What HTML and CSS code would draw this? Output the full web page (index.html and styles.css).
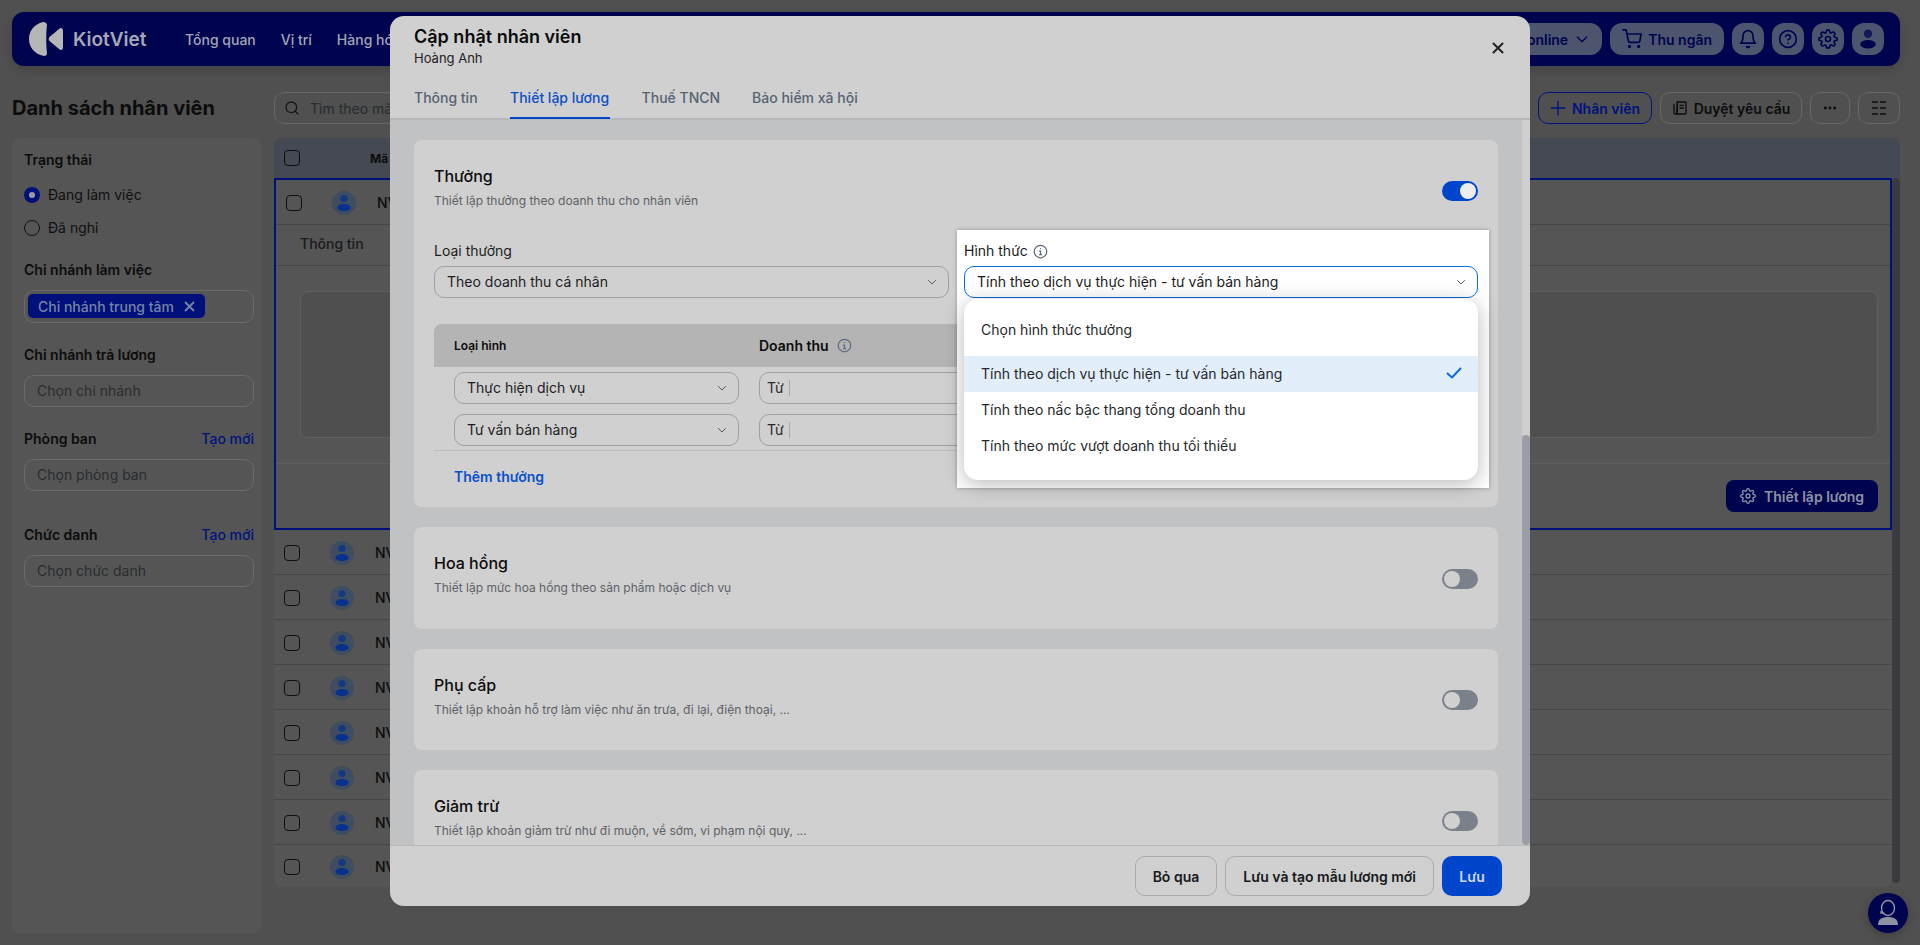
FILE: index.html
```html
<!DOCTYPE html>
<html lang="vi">
<head>
<meta charset="utf-8">
<title>Danh sách nhân viên</title>
<link rel="stylesheet" href="styles.css">
</head>
<body>
<svg class="sprite" width="0" height="0">
  <symbol id="chev" viewBox="0 0 24 24"><path d="M5 9l7 7 7-7" fill="none" stroke="currentColor" stroke-width="2" stroke-linecap="round" stroke-linejoin="round"/></symbol>
  <symbol id="info" viewBox="0 0 24 24"><g fill="none" stroke="currentColor" stroke-width="2" stroke-linecap="round"><circle cx="12" cy="12" r="10"/><path d="M10.5 11.5H12V17M10.5 17h3M12 7.5h.01"/></g></symbol>
  <symbol id="gear" viewBox="0 0 24 24"><g fill="none" stroke="currentColor" stroke-width="2" stroke-linecap="round" stroke-linejoin="round"><circle cx="12" cy="12" r="3"/><path d="M19.4 15a1.65 1.65 0 0 0 .33 1.82l.06.06a2 2 0 0 1 0 2.83 2 2 0 0 1-2.83 0l-.06-.06a1.65 1.65 0 0 0-1.82-.33 1.65 1.65 0 0 0-1 1.51V21a2 2 0 0 1-2 2 2 2 0 0 1-2-2v-.09A1.65 1.65 0 0 0 9 19.4a1.65 1.65 0 0 0-1.82.33l-.06.06a2 2 0 0 1-2.83 0 2 2 0 0 1 0-2.83l.06-.06a1.65 1.65 0 0 0 .33-1.82 1.65 1.65 0 0 0-1.51-1H3a2 2 0 0 1-2-2 2 2 0 0 1 2-2h.09A1.65 1.65 0 0 0 4.6 9a1.65 1.65 0 0 0-.33-1.82l-.06-.06a2 2 0 0 1 0-2.83 2 2 0 0 1 2.83 0l.06.06a1.65 1.65 0 0 0 1.82.33H9a1.65 1.65 0 0 0 1-1.51V3a2 2 0 0 1 2-2 2 2 0 0 1 2 2v.09a1.65 1.65 0 0 0 1 1.51 1.65 1.65 0 0 0 1.82-.33l.06-.06a2 2 0 0 1 2.83 0 2 2 0 0 1 0 2.83l-.06.06a1.65 1.65 0 0 0-.33 1.82V9a1.65 1.65 0 0 0 1.51 1H21a2 2 0 0 1 2 2 2 2 0 0 1-2 2h-.09a1.65 1.65 0 0 0-1.51 1z"/></g></symbol>
  <symbol id="person" viewBox="0 0 24 24"><circle cx="12" cy="7.5" r="3.6" fill="currentColor" opacity=".75"/><ellipse cx="12" cy="16.5" rx="6.6" ry="3.6" fill="currentColor"/></symbol>
</svg>

<div class="app">
  <header class="topbar">
    <div class="logo">
      <svg width="36" height="34" viewBox="0 0 36 34"><path d="M15 0C6 2 1 9 1 17c0 8 5 15 15 17 2 0 3-1 3-3-1-7-1-21 0-28 0-2-2-3-4-3z" fill="#b5b7b7"/><path d="M21.500 15L31 7c2-2 4-1 4 2v16c0 3-2 4-4 2l-9.500-8c-1-1-1-3 0-4z" fill="#b5b7b7"/></svg>
      <span class="logo-text">KiotViet</span>
    </div>
    <nav class="nav">
      <a>Tổng quan</a>
      <a>Vị trí</a>
      <a>Hàng hóa</a>
    </nav>
    <div class="top-actions">
      <button class="pill sales">online <svg class="ico16"><use href="#chev"/></svg></button>
      <button class="pill">
        <svg class="ico20" viewBox="0 0 24 24" fill="none" stroke="currentColor" stroke-width="2" stroke-linecap="round" stroke-linejoin="round"><circle cx="9" cy="21" r="1"/><circle cx="20" cy="21" r="1"/><path d="M1 1h4l2.68 13.39a2 2 0 0 0 2 1.61h9.72a2 2 0 0 0 2-1.61L23 6H6"/></svg>
        Thu ngân
      </button>
      <button class="pill square"><svg class="ico20" viewBox="0 0 24 24" fill="none" stroke="currentColor" stroke-width="2" stroke-linecap="round" stroke-linejoin="round"><path d="M18 8A6 6 0 0 0 6 8c0 7-3 9-3 9h18s-3-2-3-9"/><path d="M13.73 21a2 2 0 0 1-3.46 0"/></svg></button>
      <button class="pill square"><svg class="ico20" viewBox="0 0 24 24" fill="none" stroke="currentColor" stroke-width="2" stroke-linecap="round" stroke-linejoin="round"><circle cx="12" cy="12" r="10"/><path d="M9.09 9a3 3 0 0 1 5.83 1c0 2-3 3-3 3"/><path d="M12 17h.01"/></svg></button>
      <button class="pill square"><svg class="ico20"><use href="#gear"/></svg></button>
      <button class="pill square"><svg class="ico28"><use href="#person"/></svg></button>
    </div>
  </header>

  <div class="titlebar">
    <h1>Danh sách nhân viên</h1>
    <div class="search">
      <svg class="ico16" viewBox="0 0 24 24" fill="none" stroke="currentColor" stroke-width="2" stroke-linecap="round"><circle cx="11" cy="11" r="8"/><path d="M21 21l-4.3-4.3"/></svg>
      Tìm theo mã
    </div>
    <button class="tool primary">
      <svg class="ico16" viewBox="0 0 24 24" fill="none" stroke="currentColor" stroke-width="2" stroke-linecap="round"><path d="M12 2v20M2 12h20"/></svg>
      Nhân viên
    </button>
    <button class="tool review">
      <svg class="ico16" viewBox="0 0 24 24" fill="none" stroke="currentColor" stroke-width="2" stroke-linecap="round" stroke-linejoin="round"><path d="M8 3h12a1 1 0 0 1 1 1v15a2 2 0 0 1-2 2H7z"/><path d="M8 3v15M3 7v12a2 2 0 0 0 2 2h2M12 8h5M12 12h5"/></svg>
      Duyệt yêu cầu
    </button>
    <button class="tool dots">
      <svg class="ico16" viewBox="0 0 24 24" fill="currentColor"><circle cx="5" cy="12" r="2.2"/><circle cx="12" cy="12" r="2.2"/><circle cx="19" cy="12" r="2.2"/></svg>
    </button>
    <button class="tool grid-btn">
      <svg class="ico16" viewBox="0 0 16 16" fill="none" stroke="currentColor" stroke-width="1.6"><path d="M1 2h6M9 2h6M1 8h6M9 8h6M1 14h6M9 14h6"/></svg>
    </button>
  </div>

  <div class="columns">
    <aside class="filters">
      <div class="f-title">Trạng thái</div>
      <label class="radio on"><i></i>Đang làm việc</label>
      <label class="radio"><i></i>Đã nghỉ</label>

      <div class="f-title gap-branch">Chi nhánh làm việc</div>
      <div class="tag-box">
        <span class="tag">Chi nhánh trung tâm
          <svg width="11" height="11" viewBox="0 0 11 11"><path d="M1 1l9 9M10 1l-9 9" stroke="currentColor" stroke-width="1.8"/></svg>
        </span>
      </div>

      <div class="f-title gap-pay">Chi nhánh trả lương</div>
      <div class="f-input">Chọn chi nhánh</div>

      <div class="f-title split gap-dept">Phòng ban <a>Tạo mới</a></div>
      <div class="f-input">Chọn phòng ban</div>

      <div class="f-title split gap-role">Chức danh <a>Tạo mới</a></div>
      <div class="f-input">Chọn chức danh</div>
    </aside>

    <section class="table">
      <div class="t-head"><i class="check"></i><span>Mã</span></div>
      <div class="t-body">
        <div class="t-rows">
          <div class="picked">
            <div class="row inner"><i class="check"></i><span class="avatar"><svg class="ico24"><use href="#person"/></svg></span><span class="code">NV</span></div>
            <div class="detail-tabs">Thông tin</div>
            <div class="detail-box"></div>
            <div class="detail-foot">
              <button class="setup"><svg class="ico16"><use href="#gear"/></svg>Thiết lập lương</button>
            </div>
          </div>
          <div class="row"><i class="check"></i><span class="avatar"><svg class="ico24"><use href="#person"/></svg></span><span class="code">NV</span></div>
          <div class="row"><i class="check"></i><span class="avatar"><svg class="ico24"><use href="#person"/></svg></span><span class="code">NV</span></div>
          <div class="row"><i class="check"></i><span class="avatar"><svg class="ico24"><use href="#person"/></svg></span><span class="code">NV</span></div>
          <div class="row"><i class="check"></i><span class="avatar"><svg class="ico24"><use href="#person"/></svg></span><span class="code">NV</span></div>
          <div class="row"><i class="check"></i><span class="avatar"><svg class="ico24"><use href="#person"/></svg></span><span class="code">NV</span></div>
          <div class="row"><i class="check"></i><span class="avatar"><svg class="ico24"><use href="#person"/></svg></span><span class="code">NV</span></div>
          <div class="row"><i class="check"></i><span class="avatar"><svg class="ico24"><use href="#person"/></svg></span><span class="code">NV</span></div>
          <div class="row last"><i class="check"></i><span class="avatar"><svg class="ico24"><use href="#person"/></svg></span><span class="code">NV</span></div>
        </div>
        <div class="t-scroll"></div>
      </div>
    </section>
  </div>
</div>

<button class="support">
  <svg width="24" height="28" viewBox="0 0 24 28" fill="none" stroke="#8d93a3" stroke-width="1.4"><ellipse cx="12" cy="9" rx="6.5" ry="7.5"/><path d="M5 12v2h3"/><path d="M2 26c0-6 4-8 10-8s10 2 10 8z" fill="#8d93a3" stroke="none"/></svg>
</button>

<div class="modal">
  <div class="m-head">
    <div class="m-title">Cập nhật nhân viên</div>
    <div class="m-sub">Hoàng Anh</div>
    <svg class="m-close" width="12" height="12" viewBox="0 0 12 12"><path d="M1.500 1.500l9 9M10.500 1.500l-9 9" stroke="#222" stroke-width="2" stroke-linecap="round"/></svg>
  </div>
  <div class="m-tabs">
    <a>Thông tin</a>
    <a class="active">Thiết lập lương</a>
    <a>Thuế TNCN</a>
    <a>Bảo hiểm xã hội</a>
  </div>

  <div class="m-body">
    <div class="m-content">
      <div class="card">
        <div class="c-head">
          <div>
            <div class="c-title">Thưởng</div>
            <div class="c-desc">Thiết lập thưởng theo doanh thu cho nhân viên</div>
          </div>
          <span class="toggle on"></span>
        </div>

        <div class="fields">
          <div class="field">
            <div class="f-label">Loại thưởng</div>
            <div class="select">Theo doanh thu cá nhân <svg class="chev"><use href="#chev"/></svg></div>
          </div>
          <div class="field lifted">
            <div class="f-label">Hình thức <svg class="info"><use href="#info"/></svg></div>
            <div class="select focus">Tính theo dịch vụ thực hiện - tư vấn bán hàng <svg class="chev"><use href="#chev"/></svg></div>
            <div class="menu">
              <div class="opt first">Chọn hình thức thưởng</div>
              <div class="opt picked-opt">Tính theo dịch vụ thực hiện - tư vấn bán hàng
                <svg class="tick" width="16" height="12" viewBox="0 0 16 12"><path d="M1.500 6.500L6 10.500 14.500 1.500" fill="none" stroke="#0a6ee0" stroke-width="2" stroke-linecap="round" stroke-linejoin="round"/></svg>
              </div>
              <div class="opt">Tính theo nấc bậc thang tổng doanh thu</div>
              <div class="opt">Tính theo mức vượt doanh thu tối thiểu</div>
            </div>
          </div>
        </div>

        <div class="b-table">
          <div class="b-head">
            <span class="b-type">Loại hình</span>
            <span class="b-rev">Doanh thu <svg class="info"><use href="#info"/></svg></span>
          </div>
          <div class="b-row">
            <div class="select">Thực hiện dịch vụ <svg class="chev"><use href="#chev"/></svg></div>
            <div class="from"><span>Từ</span></div>
          </div>
          <div class="b-row">
            <div class="select">Tư vấn bán hàng <svg class="chev"><use href="#chev"/></svg></div>
            <div class="from"><span>Từ</span></div>
          </div>
        </div>
        <a class="add-bonus">Thêm thưởng</a>
      </div>

      <div class="card">
        <div class="c-head">
          <div>
            <div class="c-title">Hoa hồng</div>
            <div class="c-desc">Thiết lập mức hoa hồng theo sản phẩm hoặc dịch vụ</div>
          </div>
          <span class="toggle"></span>
        </div>
      </div>

      <div class="card">
        <div class="c-head">
          <div>
            <div class="c-title">Phụ cấp</div>
            <div class="c-desc">Thiết lập khoản hỗ trợ làm việc như ăn trưa, đi lại, điện thoại, ...</div>
          </div>
          <span class="toggle"></span>
        </div>
      </div>

      <div class="card">
        <div class="c-head">
          <div>
            <div class="c-title">Giảm trừ</div>
            <div class="c-desc">Thiết lập khoản giảm trừ như đi muộn, về sớm, vi phạm nội quy, ...</div>
          </div>
          <span class="toggle"></span>
        </div>
      </div>
    </div>
    <div class="m-scroll"><div class="m-thumb"></div></div>
  </div>

  <div class="m-foot">
    <button class="btn">Bỏ qua</button>
    <button class="btn">Lưu và tạo mẫu lương mới</button>
    <button class="btn save">Lưu</button>
  </div>
</div>
</body>
</html>
```

FILE: styles.css
```css
* { box-sizing: border-box; }

html, body {
  margin: 0;
  height: 945px;
  overflow: hidden;
}
body {
  position: relative;
  background: #4f504f;
  font-family: Inter, "Noto Sans", sans-serif;
  font-size: 14px;
  color: #0c0c0c;
}
button {
  font-family: inherit;
  cursor: pointer;
}
.sprite { position: absolute; }

.ico16 { width: 16px; height: 16px; }
.ico20 { width: 20px; height: 20px; }
.ico24 { width: 24px; height: 24px; }
.ico28 { width: 28px; height: 28px; }

/* page behind the dialog */
.app {
  padding: 12px 20px 0 12px;
}
.topbar {
  height: 54px;
  background: #00044f;
  border-radius: 12px;
  display: flex;
  align-items: center;
  padding: 0 16px;
  box-shadow: 0 4px 10px rgba(0,0,0,.18);
}
.logo {
  display: flex;
  align-items: center;
  gap: 9px;
  width: 157px;
}
.logo-text {
  font-size: 19px;
  font-weight: 600;
  color: #a4a9b7;
}
.nav {
  display: flex;
  gap: 25px;
}
.nav a {
  color: #a0a6b8;
  font-weight: 500;
}
.top-actions {
  margin-left: auto;
  display: flex;
  gap: 8px;
}
.pill {
  height: 32px;
  padding: 0 12px;
  border: 0;
  border-radius: 12px;
  background: #4c556d;
  color: #00044f;
  font-size: 14px;
  font-weight: 600;
  display: flex;
  align-items: center;
  gap: 6px;
  white-space: nowrap;
}
.pill.sales {
  width: 120px;
  justify-content: flex-end;
}
.pill.square {
  width: 32px;
  padding: 0;
  justify-content: center;
}

.titlebar {
  margin-top: 26px;
  height: 32px;
  display: flex;
  align-items: center;
  gap: 8px;
}
.titlebar h1 {
  width: 250px;
  margin: 0 4px 0 0;
  font-size: 20px;
  font-weight: 700;
}
.search {
  flex: 1;
  height: 32px;
  border: 1px solid #676767;
  border-radius: 10px;
  display: flex;
  align-items: center;
  gap: 10px;
  padding: 0 9px;
  color: #262b2e;
}
.search svg { color: #171717; }
.tool {
  height: 32px;
  border: 1px solid #686868;
  border-radius: 10px;
  background: transparent;
  color: #0c0c0c;
  font-size: 14px;
  font-weight: 600;
  display: flex;
  align-items: center;
  justify-content: center;
  gap: 6px;
  padding: 0;
  white-space: nowrap;
}
.tool.primary {
  width: 114px;
  border-color: #00127f;
  color: #00127f;
}
.tool.review { width: 142px; }
.tool.dots { width: 40px; }
.tool.grid-btn { width: 42px; }

.columns {
  margin-top: 14px;
  display: grid;
  grid-template-columns: 250px 1fr;
  gap: 12px;
  height: 795px;
}
.filters {
  background: #555555;
  border-radius: 8px;
  padding: 12px 8px 12px 12px;
}
.f-title {
  font-size: 14px;
  font-weight: 600;
  line-height: 20px;
  color: #0c0c0c;
}
.f-title.split {
  display: flex;
  justify-content: space-between;
}
.f-title a {
  color: #00127f;
  font-weight: 500;
}
.radio {
  display: flex;
  align-items: center;
  gap: 8px;
  height: 33px;
  color: #101010;
}
.radio:first-of-type { margin-top: 8px; }
.radio i {
  width: 16px;
  height: 16px;
  border-radius: 50%;
  border: 1px solid #111;
}
.radio.on i {
  border: 5px solid #00107a;
  background: #9a9da2;
}
.gap-branch { margin-top: 16px; }
.tag-box {
  margin-top: 10px;
  height: 33px;
  border: 1px solid #6a6a6a;
  border-radius: 10px;
  padding: 3px;
}
.tag {
  height: 24px;
  width: 177px;
  display: flex;
  align-items: center;
  justify-content: space-between;
  padding: 0 10px;
  background: #00107a;
  border-radius: 5px;
  color: #7485a6;
  font-weight: 500;
}
.gap-pay { margin-top: 22px; }
.gap-dept { margin-top: 22px; }
.gap-role { margin-top: 34px; }
.f-input {
  margin-top: 10px;
  height: 32px;
  border: 1px solid #6a6a6a;
  border-radius: 10px;
  padding: 0 12px;
  line-height: 30px;
  color: #292d30;
}

.table {
  display: flex;
  flex-direction: column;
}
.t-head {
  height: 40px;
  background: #444953;
  border-radius: 8px 8px 0 0;
  display: flex;
  align-items: center;
  padding-left: 10px;
  font-size: 12px;
  font-weight: 700;
  color: #0c0c0c;
}
.t-head span { margin-left: 70px; }
.check {
  width: 16px;
  height: 16px;
  border: 1px solid #0e0e0e;
  border-radius: 4px;
  flex: none;
}
.t-body {
  display: flex;
}
.t-rows {
  flex: 1;
}
.t-scroll {
  width: 8px;
  height: 705px;
  background: #3a3b3f;
  border-radius: 4px;
}
.picked {
  height: 352px;
  border: 2px solid #00107a;
  background: #555555;
}
.row {
  height: 45px;
  padding-top: 1px;
  border-bottom: 1px solid #474747;
  display: flex;
  align-items: center;
  padding-left: 10px;
  background: #555555;
}
.row.last {
  height: 42px;
  border-bottom: 0;
  border-radius: 0 0 8px 8px;
}
.avatar {
  width: 24px;
  height: 24px;
  margin-left: 30px;
  border-radius: 50%;
  background: #3f4d60;
  color: #09308e;
  flex: none;
}
.avatar svg { display: block; }
.code {
  margin-left: 21px;
  font-weight: 500;
}
.detail-tabs {
  height: 41px;
  border-bottom: 1px solid #474747;
  padding: 10px 0 0 24px;
  font-weight: 500;
  color: #191b1d;
}
.detail-box {
  margin: 25px 12px 0 24px;
  height: 147px;
  background: #4f4f4f;
  border: 1px solid #5f5f5f;
  border-radius: 8px;
}
.detail-foot {
  margin-top: 25px;
  border-top: 1px solid #5f5f5f;
  padding: 16px 12px 0 0;
  display: flex;
  justify-content: flex-end;
}
.setup {
  width: 152px;
  height: 32px;
  border: 0;
  border-radius: 8px;
  background: #00044f;
  color: #8d93a3;
  font-size: 14px;
  font-weight: 600;
  display: flex;
  align-items: center;
  justify-content: center;
  gap: 8px;
}

.support {
  position: absolute;
  left: 1868px;
  top: 893px;
  width: 40px;
  height: 40px;
  border: 0;
  padding: 0;
  border-radius: 50%;
  background: #00044f;
  display: flex;
  align-items: center;
  justify-content: center;
  box-shadow: 0 2px 10px rgba(0,0,0,.25);
}

/* dialog */
.modal {
  position: absolute;
  left: 390px;
  top: 16px;
  width: 1140px;
  height: 890px;
  background: #d0d0d0;
  border-radius: 14px;
  display: flex;
  flex-direction: column;
  overflow: hidden;
}
.m-head {
  position: relative;
  height: 62px;
  padding: 9px 24px 0;
}
.m-title {
  font-size: 18px;
  line-height: 24px;
  font-weight: 600;
  color: #0b0b0b;
}
.m-sub {
  font-size: 13px;
  line-height: 18px;
  color: #222;
}
.m-close {
  position: absolute;
  right: 26px;
  top: 26px;
}
.m-tabs {
  height: 42px;
  padding: 0 24px;
  display: flex;
  gap: 32px;
  border-bottom: 2px solid #b7b8ba;
}
.m-tabs a {
  height: 41px;
  line-height: 40px;
  font-size: 14px;
  font-weight: 500;
  color: #566373;
}
.m-tabs a.active {
  color: #0b4fc6;
  border-bottom: 2px solid #0046cc;
  padding: 0 .5px;
}
.m-body {
  flex: 1;
  min-height: 0;
  display: flex;
  background: #c1c2c4;
}
.m-content {
  flex: 1;
  padding: 20px 24px 0;
  display: flex;
  flex-direction: column;
  gap: 20px;
}
.m-scroll {
  width: 8px;
  background: #cfcfd0;
  display: flex;
  align-items: flex-end;
}
.m-thumb {
  width: 8px;
  height: 410px;
  border-radius: 4px;
  background: #9a9da4;
}
.m-foot {
  height: 61px;
  border-top: 1px solid #b8b9bb;
  padding: 0 28px 0 0;
  display: flex;
  align-items: center;
  justify-content: flex-end;
  gap: 8px;
}
.btn {
  height: 40px;
  padding: 0 17px;
  border: 1px solid #a8a9ab;
  border-radius: 10px;
  background: transparent;
  color: #16181c;
  font-size: 14px;
  font-weight: 600;
}
.btn.save {
  width: 60px;
  padding: 0;
  border: 0;
  background: #0046cc;
  color: #cfd8ee;
}

.card {
  flex: none;
  background: #d0d0d0;
  border-radius: 8px;
  padding: 24px 20px;
}
.card:first-child {
  padding-bottom: 20px;
}
.card:nth-child(3) {
  padding-bottom: 23px;
}
.c-head {
  height: 54px;
  display: flex;
  justify-content: space-between;
  align-items: center;
}
.c-head > div {
  align-self: flex-start;
}
.c-title {
  font-size: 16px;
  line-height: 24px;
  font-weight: 500;
  color: #0c0c0c;
}
.c-desc {
  margin-top: 5px;
  font-size: 12px;
  line-height: 16px;
  color: #5d6166;
}
.toggle {
  position: relative;
  width: 36px;
  height: 20px;
  border-radius: 10px;
  background: #7b818a;
  flex: none;
}
.card:nth-child(2) .toggle { top: 1px; }
.toggle::after {
  content: "";
  position: absolute;
  left: 2px;
  top: 2px;
  width: 16px;
  height: 16px;
  border-radius: 50%;
  background: #d0d0d0;
}
.toggle.on { background: #0046cc; }
.toggle.on::after {
  left: 18px;
  background: #ededed;
}

.fields {
  margin-top: 23px;
  display: grid;
  grid-template-columns: 515px 514px;
  gap: 15px;
}
.f-label {
  display: flex;
  align-items: center;
  gap: 5px;
  line-height: 20px;
  font-size: 14px;
  color: #1c1c1c;
  margin-bottom: 5px;
}
.info {
  width: 15px;
  height: 15px;
  color: #5c6b7e;
}
.select {
  position: relative;
  height: 32px;
  border: 1px solid #9c9fa6;
  border-radius: 10px;
  padding: 0 12px;
  line-height: 30px;
  font-size: 14px;
  color: #1c1c1c;
}
.chev {
  position: absolute;
  right: 10px;
  top: 9px;
  width: 12px;
  height: 12px;
  color: #555a62;
}
.field.lifted {
  position: relative;
  z-index: 2;
}
.field.lifted::before {
  content: "";
  position: absolute;
  left: -7px;
  top: -11px;
  width: 532px;
  height: 258px;
  background: #fff;
  box-shadow: 0 0 4px rgba(0,0,0,.3);
  z-index: -1;
}
.select.focus {
  border-color: #0a6ee0;
  background: #fff;
}
.menu {
  position: absolute;
  left: 0;
  top: 58px;
  width: 514px;
  height: 181px;
  padding: 13px 0 0;
  background: #fff;
  border-radius: 14px;
  box-shadow: 0 4px 20px rgba(0,0,0,.28);
}
.opt {
  position: relative;
  height: 36px;
  line-height: 36px;
  padding: 0 16px 0 17px;
  font-size: 14px;
  color: #26282b;
}
.opt.first { margin-bottom: 8px; }
.opt.picked-opt { background: #e2eefa; }
.tick {
  position: absolute;
  right: 16px;
  top: 11px;
}

.b-table {
  margin-top: 26px;
  border-bottom: 1px solid #bcbdbf;
  padding-bottom: 4px;
}
.b-head {
  height: 43px;
  background: #b4b4b4;
  border-radius: 8px 8px 0 0;
  display: flex;
  align-items: center;
  padding-left: 20px;
}
.b-type {
  width: 305px;
  font-size: 12px;
  font-weight: 600;
}
.b-rev {
  display: flex;
  align-items: center;
  gap: 8px;
  font-size: 14px;
  font-weight: 600;
}
.b-row {
  margin: 5px 0 10px 20px;
  display: grid;
  grid-template-columns: 285px 1fr;
  gap: 20px;
}
.b-row + .b-row { margin-bottom: 0; margin-top: 0; }
.from {
  height: 32px;
  border: 1px solid #9c9fa6;
  border-radius: 10px;
  padding: 0 7px;
  display: flex;
  align-items: center;
  font-size: 14px;
  color: #2a2a2a;
}
.from span {
  padding-right: 5px;
  border-right: 1px solid #a9a9a9;
  line-height: 16px;
}
.add-bonus {
  display: block;
  margin: 16px 0 0 20px;
  line-height: 20px;
  font-size: 14px;
  font-weight: 600;
  color: #0a50cc;
}
```
